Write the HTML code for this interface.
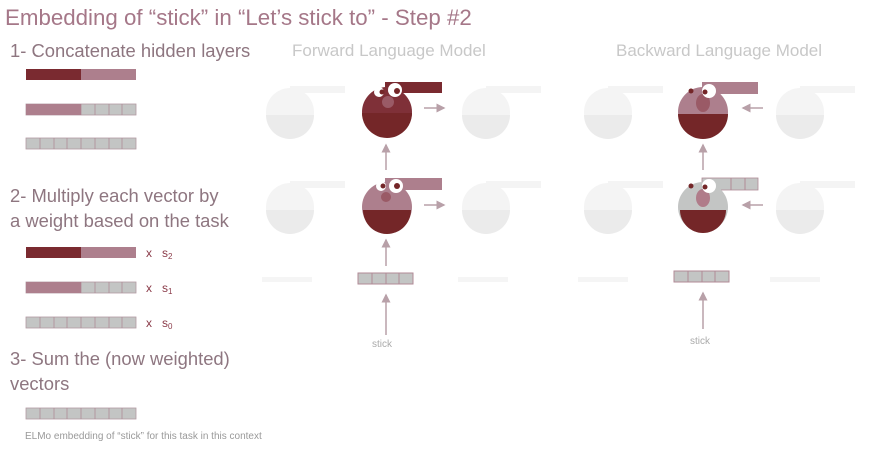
<!DOCTYPE html>
<html><head><style>
body{margin:0;width:879px;height:455px;background:#fff;position:relative;overflow:hidden;font-family:"Liberation Sans",sans-serif}
.t{position:absolute;white-space:nowrap}
</style></head><body>
<div class="t" style="left:5px;top:5px;font-size:22.3px;color:#a57788">Embedding of “stick” in “Let’s stick to” - Step #2</div>
<div class="t" style="left:10px;top:40px;font-size:18.4px;color:#8e7680">1- Concatenate hidden layers</div>
<div class="t" style="left:10px;top:183px;font-size:18.4px;color:#8e7680;line-height:25px">2- Multiply each vector by<br>a weight based on the task</div>
<div class="t" style="left:10px;top:346px;font-size:18.4px;color:#8e7680;line-height:25px">3- Sum the (now weighted)<br>vectors</div>
<div class="t" style="left:25px;top:431px;font-size:10px;color:#999">ELMo embedding of “stick” for this task in this context</div>
<div class="t" style="left:292px;top:41px;font-size:17px;color:#c8c8c8">Forward Language Model</div>
<div class="t" style="left:616px;top:41px;font-size:17px;color:#c8c8c8">Backward Language Model</div>
<div class="t" style="left:372px;top:339px;font-size:10px;color:#aaa">stick</div>
<div class="t" style="left:690px;top:336px;font-size:10px;color:#aaa">stick</div>
<div class="t" style="left:146px;top:246px;font-size:12px;color:#8a3a48">x&nbsp;&nbsp;&nbsp;s<sub style="font-size:8px;vertical-align:-2px">2</sub></div>
<div class="t" style="left:146px;top:281px;font-size:12px;color:#8a3a48">x&nbsp;&nbsp;&nbsp;s<sub style="font-size:8px;vertical-align:-2px">1</sub></div>
<div class="t" style="left:146px;top:316px;font-size:12px;color:#8a3a48">x&nbsp;&nbsp;&nbsp;s<sub style="font-size:8px;vertical-align:-2px">0</sub></div>
<svg width="879" height="455" style="position:absolute;left:0;top:0">
<defs>
<g id="gb"><rect width="110" height="11" fill="#c3c5c4" stroke="#b29aa2" stroke-width="0.8"/><path d="M14 0v11M28 0v11M41 0v11M55 0v11M69 0v11M83 0v11M96 0v11" stroke="#b08a96" stroke-width="0.8"/></g>
<marker id="ah" markerWidth="6" markerHeight="6" refX="5" refY="3" orient="auto"><path d="M0 0L6 3L0 6z" fill="#b8a0a8"/></marker>
<g id="ghost" fill="none"><circle cx="0" cy="0" r="24" fill="#f4f4f4"/><path d="M-24 3A24 24 0 0 0 24 3Z" fill="#ebebeb"/><rect x="0" y="-26" width="55" height="7" fill="#f4f4f4"/></g>
</defs>
<rect x="26" y="69" width="110" height="11" fill="#ad7f8d"/><rect x="26" y="69" width="55" height="11" fill="#7a2a30"/>
<use href="#gb" x="26" y="104"/><rect x="26" y="104" width="55" height="11" fill="#ad7f8d"/>
<use href="#gb" x="26" y="138"/>
<rect x="26" y="247" width="110" height="11" fill="#ad7f8d"/><rect x="26" y="247" width="55" height="11" fill="#7a2a30"/>
<use href="#gb" x="26" y="282"/><rect x="26" y="282" width="55" height="11" fill="#ad7f8d"/>
<use href="#gb" x="26" y="317"/>
<use href="#gb" x="26" y="408"/>
<use href="#ghost" x="290" y="112"/><use href="#ghost" x="486" y="112"/>
<use href="#ghost" x="290" y="207"/><use href="#ghost" x="486" y="207"/>
<use href="#ghost" x="608" y="112"/><use href="#ghost" x="800" y="112"/>
<use href="#ghost" x="608" y="207"/><use href="#ghost" x="800" y="207"/>
<rect x="262" y="277" width="50" height="5" fill="#f5f5f5"/><rect x="458" y="277" width="50" height="5" fill="#f5f5f5"/>
<rect x="578" y="277" width="50" height="5" fill="#f5f5f5"/><rect x="770" y="277" width="50" height="5" fill="#f5f5f5"/>
<rect x="385" y="82" width="57" height="11" fill="#7a2a30"/>
<circle cx="387" cy="112" r="25" fill="#7f3038"/>
<path d="M362 113 A25 25 0 0 0 412 113Z" fill="#742628"/>
<circle cx="388" cy="102" r="6" fill="#9a5a66"/>
<circle cx="379" cy="92" r="5" fill="#fff"/><circle cx="395" cy="90" r="7" fill="#fff"/>
<circle cx="382" cy="92" r="2.5" fill="#742628"/><circle cx="397" cy="91" r="3" fill="#742628"/>
<rect x="385" y="178" width="57" height="12" fill="#ad7f8d"/>
<circle cx="387" cy="207" r="25" fill="#ad7f8d"/>
<path d="M363 210 A24 24 0 0 0 411 210Z" fill="#742628"/>
<circle cx="386" cy="197" r="5" fill="#9a5a66"/>
<circle cx="381" cy="186" r="5" fill="#fff"/><circle cx="396" cy="186" r="7" fill="#fff"/>
<circle cx="383" cy="186" r="2.5" fill="#742628"/><circle cx="397" cy="186" r="3" fill="#742628"/>
<rect x="702" y="82" width="56" height="12" fill="#ad7f8d"/>
<circle cx="703" cy="112" r="25" fill="#ad7f8d"/>
<path d="M678 114 A25 25 0 0 0 728 114Z" fill="#742628"/>
<ellipse cx="703" cy="103" rx="7" ry="9" fill="#9a5a66"/>
<circle cx="709" cy="91" r="7" fill="#fff"/><circle cx="691" cy="91" r="2.5" fill="#742628"/><circle cx="705" cy="92" r="2.5" fill="#742628"/>
<rect x="702" y="178" width="56" height="12" fill="#c3c5c4" stroke="#b08a96" stroke-width="0.8"/>
<path d="M731 178v12M745 178v12" stroke="#b08a96"/>
<circle cx="703" cy="207" r="25" fill="#c3c5c4"/>
<path d="M680 210 A23 23 0 0 0 726 210Z" fill="#742628"/>
<ellipse cx="703" cy="198" rx="7" ry="9" fill="#b07c8a"/>
<circle cx="709" cy="186" r="7" fill="#fff"/><circle cx="691" cy="186" r="2.5" fill="#742628"/><circle cx="705" cy="187" r="2.5" fill="#742628"/>
<g transform="translate(358,273)"><rect width="55" height="11" fill="#c3c5c4" stroke="#b08a96"/><path d="M14 0v11M28 0v11M41 0v11" stroke="#b08a96"/></g>
<g transform="translate(674,271)"><rect width="55" height="11" fill="#c3c5c4" stroke="#b08a96"/><path d="M14 0v11M28 0v11M41 0v11" stroke="#b08a96"/></g>
<g stroke="#b8a0a8" stroke-width="1.5" marker-end="url(#ah)">
<line x1="386" y1="335" x2="386" y2="295"/><line x1="386" y1="266" x2="386" y2="240"/><line x1="386" y1="170" x2="386" y2="145"/>
<line x1="424" y1="108" x2="444" y2="108"/><line x1="424" y1="205" x2="444" y2="205"/>
<line x1="703" y1="329" x2="703" y2="293"/><line x1="703" y1="170" x2="703" y2="145"/>
<line x1="763" y1="108" x2="743" y2="108"/><line x1="763" y1="205" x2="743" y2="205"/>
</g>
</svg>
</body></html>
